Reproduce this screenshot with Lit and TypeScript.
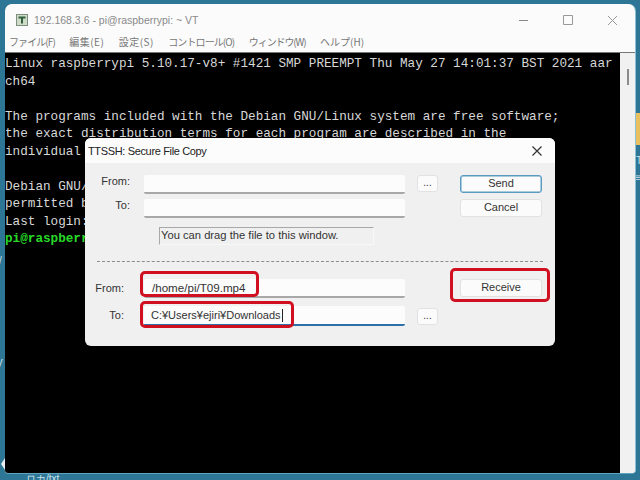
import { LitElement, html, css } from "lit";
import { customElement } from "lit/decorators.js";

const MENU: [string, number][] = [
  ["ファイル(F)", -0.92],
  ["編集(E)", 0.45],
  ["設定(S)", 0.45],
  ["コントロール(O)", -0.9],
  ["ウィンドウ(W)", -1.1],
  ["ヘルプ(H)", 0],
];

const DESK: [string, number, number][] = [
  ["/", -1, 255],
  ["V", -4, 358],
  ["T", 636, 155],
  ["≡", 635, 172],
  ["ロカ/txt", 26, 473],
];

@customElement("app-root")
export class AppRoot extends LitElement {
  static styles = css`
    :host { display: block; width: 640px; height: 480px; position: relative; overflow: hidden; background: #2d7695; font-family: "Noto Sans CJK JP", "Liberation Sans", sans-serif; }
    .strip { position: absolute; right: 0; top: 113px; width: 5px; height: 32px; background: #e8c060; }
    .arrow { position: absolute; left: 0; top: 458px; width: 0; height: 0; border-left: 4px solid transparent; border-top: 6px solid transparent; border-bottom: 6px solid transparent; border-right: 4px solid #e6eef2; margin-left: -3px; }
    .deskText { position: absolute; color: #cfe3ec; font: 10px/12px "Liberation Sans", sans-serif; white-space: nowrap; }
    .win { position: absolute; left: 5px; top: 4px; width: 630px; height: 469px; background: #fbfbfb; border-radius: 7px 7px 3px 3px; overflow: hidden; display: flex; flex-direction: column; box-shadow: 0 1px 0 #5ea3bf, 1px 0 0 #8cc0d2; }
    .title { height: 25px; flex: none; display: flex; align-items: center; padding: 4px 0 0 11px; gap: 6px; color: #8a8a8a; }
    .title span { flex: 1; font: 10.5px "Liberation Sans", sans-serif; position: relative; top: -1px; }
    .title svg { display: block; position: relative; top: -1px; }
    .ctl { display: flex; width: 118px; align-items: center; position: relative; top: 0; }
    .menu { height: 19px; flex: none; display: flex; gap: 14.5px; padding: 0 0 2px 4px; align-items: center; font-size: 10px; color: #777; white-space: nowrap; box-sizing: border-box; }
    .body { flex: 1; display: flex; border-top: 1px solid #777; min-height: 0; }
    .term { width: 615px; background: #000; color: #d8d8d8; font: 12.66px/17.55px "Liberation Mono", monospace; white-space: pre; padding-top: 2px; overflow: hidden; }
    .green { color: #28d828; font-weight: 700; }
    .sb { flex: 1; background: #f1f1f1; position: relative; }
    .thumb { position: absolute; left: 7px; top: 16px; width: 2px; height: 16px; background: #8b8b8b; }
    .dlg { position: absolute; left: 85px; top: 138px; width: 470px; height: 208px; background: #f0f0f0; border-radius: 6px; overflow: hidden; color: #333; font: 11px "Liberation Sans", sans-serif; }
    .dlgTitle { height: 25px; background: #fcfcfc; display: flex; align-items: center; justify-content: space-between; padding: 0 13px 0 3px; font-size: 11px; letter-spacing: -0.35px; color: #222; }
    .dlgBody { padding-top: 12px; }
    .row { display: grid; grid-template-columns: 59px 261px 55px 82px; align-items: start; height: 24px; }
    .row.low1 { height: 27px; }
    .row.low2 { height: 20px; }
    .lbl { text-align: right; padding-right: 14px; line-height: 13px; }
    .low1 .lbl, .low2 .lbl { padding: 3px 20px 0 0; }
    .field { height: 17px; background: #fcfcfc; border-bottom: 2px solid #a8a8a8; border-radius: 2px; display: flex; align-items: center; padding-left: 8px; color: #333; }
    .low1 .field { font-size: 11.6px; }
    .field.focus { border-bottom-color: #2f6fa8; height: 18px; padding-left: 7px; }
    .small { width: 19px; height: 15px; background: #fbfbfb; border: 1px solid #e2e2e2; border-radius: 3px; margin: 0 0 0 12px; text-align: center; font-size: 10px; line-height: 14px; }
    .low2 .small { margin-top: 2px; }
    .btn { width: 80px; height: 16px; background: #fbfbfb; border: 1px solid #e2e2e2; border-radius: 3px; text-align: center; line-height: 15px; color: #333; }
    .btn.def { border-color: #5a9bc0; box-shadow: inset 0 0 0 0.5px #5a9bc0; }
    .hint { margin: 4px 0 0 74px; width: 212px; height: 16px; border-top: 1px solid #a8a8a8; border-left: 1px solid #a8a8a8; border-right: 1px solid #f8f8f8; border-bottom: 1px solid #f8f8f8; font-size: 11.2px; line-height: 15px; padding-left: 1px; }
    .sep { border-top: 1px dashed #8c8c8c; margin: 16px 0 17px 12px; width: 446px; }
    .cursor { display: inline-block; width: 1px; height: 13px; background: #222; margin-left: 1px; }
    .mark { position: absolute; border: 3px solid #d01020; border-radius: 5px; box-sizing: border-box; }
    .m1 { left: 140px; top: 271px; width: 119px; height: 26px; }
    .m2 { left: 140px; top: 301px; width: 154px; height: 27px; }
    .m3 { left: 450px; top: 268px; width: 100px; height: 34px; }
  `;

  render() {
    const term = `Linux raspberrypi 5.10.17-v8+ #1421 SMP PREEMPT Thu May 27 14:01:37 BST 2021 aar
ch64

The programs included with the Debian GNU/Linux system are free software;
the exact distribution terms for each program are described in the
individual files in /usr/share/doc/*/copyright.

Debian GNU/Linux comes with ABSOLUTELY NO WARRANTY, to the extent
permitted by applicable law.
Last login: Thu May 27 14:01:37 2021
`;
    return html`
      <div class="strip"></div>
      <div class="arrow"></div>
      ${DESK.map(([t, x, y]) => html`<div class="deskText" style="left:${x}px;top:${y}px">${t}</div>`)}
      <div class="win">
        <div class="title">
          <svg width="12" height="12" viewBox="0 0 12 12"><rect x="0.500" y="0.500" width="11" height="11" fill="#cfdcc8" stroke="#7f8f7f"/><path d="M2.500 2.500h7v2H7v5H5v-5H2.500z" fill="#2f5f3f"/></svg>
          <span>192.168.3.6 - pi@raspberrypi: ~ VT</span>
          <div class="ctl">
            <svg width="118" height="14" viewBox="0 0 118 14"><path d="M2 7.500h9" stroke="#888"/><path d="M46.500 2.500h9v9h-9z" fill="none" stroke="#999"/><path d="M91 3l9 9M100 3l-9 9" stroke="#999"/></svg>
          </div>
        </div>
        <div class="menu">
          ${MENU.map(([t, ls]) => html`<span style="letter-spacing:${ls}px">${t}</span>`)}
        </div>
        <div class="body">
          <div class="term">${term}<span class="green">pi@raspberrypi:~ $</span></div>
          <div class="sb"><div class="thumb"></div></div>
        </div>
      </div>
      <div class="dlg">
        <div class="dlgTitle">
          <span>TTSSH: Secure File Copy</span>
          <svg width="10" height="10" viewBox="0 0 10 10"><path d="M0.500 0.500l9 9M9.500 0.500l-9 9" stroke="#333" stroke-width="1.2"/></svg>
        </div>
        <div class="dlgBody">
          <div class="row"><div class="lbl">From:</div><div class="field"></div><div class="small">...</div><div class="btn def">Send</div></div>
          <div class="row"><div class="lbl">To:</div><div class="field"></div><div></div><div class="btn">Cancel</div></div>
          <div class="hint">You can drag the file to this window.</div>
          <div class="sep"></div>
          <div class="row low1"><div class="lbl">From:</div><div class="field">/home/pi/T09.mp4</div><div></div><div class="btn">Receive</div></div>
          <div class="row low2"><div class="lbl">To:</div><div class="field focus">C:¥Users¥ejiri¥Downloads<i class="cursor"></i></div><div class="small">...</div><div></div></div>
        </div>
      </div>
      <div class="mark m1"></div>
      <div class="mark m2"></div>
      <div class="mark m3"></div>
    `;
  }
}
